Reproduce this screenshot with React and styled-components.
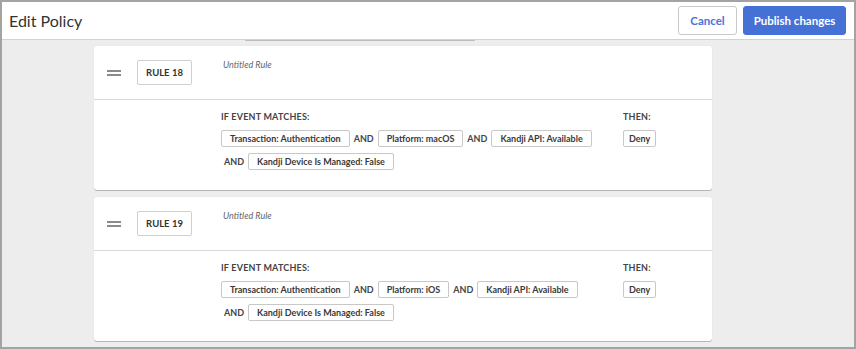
import React from "react";
import styled, { createGlobalStyle } from "styled-components";

const GlobalStyle = createGlobalStyle`
  html, body {
    margin: 0;
    padding: 0;
    background: #ffffff;
  }
  * {
    box-sizing: border-box;
  }
`;

const Frame = styled.div`
  width: 856px;
  height: 349px;
  border: 2px solid #a3a3a3;
  display: flex;
  flex-direction: column;
  overflow: hidden;
  font-family: Lato, "Liberation Sans", sans-serif;
  color: #333;
`;

const TopBar = styled.div`
  height: 38px;
  flex-shrink: 0;
  display: flex;
  align-items: center;
  justify-content: space-between;
  padding: 0 8px 0 7px;
  background: #fff;
  border-bottom: 1px solid #d2d2d2;
`;

const Title = styled.h1`
  margin: 0;
  font-size: 16px;
  font-weight: 400;
  color: #333;
`;

const Actions = styled.div`
  display: flex;
  gap: 6px;
`;

const Button = styled.button`
  height: 29px;
  padding: 0;
  font-family: inherit;
  font-size: 11.5px;
  font-weight: 700;
  white-space: nowrap;
  border-radius: 3px;
  border: 1px solid ${(p) => (p.primary ? "#4571d6" : "#c9c9c9")};
  background: ${(p) => (p.primary ? "#4571d6" : "#fff")};
  color: ${(p) => (p.primary ? "#fff" : "#4a72d8")};
  width: ${(p) => p.w}px;
`;

const Content = styled.div`
  flex: 1;
  background: #ededed;
  display: flex;
  flex-direction: column;
  gap: 7px;
  padding-left: 92px;
  overflow: hidden;
`;

const PrevTail = styled.div`
  height: 1px;
  flex-shrink: 0;
  margin-bottom: -2px;
  display: flex;
  & span {
    margin-left: 151px;
    width: 230px;
    height: 1px;
    background: #bdbdbd;
  }
`;

const Card = styled.div`
  width: 618px;
  flex-shrink: 0;
  background: #fff;
  border-radius: 3px;
  box-shadow: 0 1px 0 #b5b5b5, 0 0 1px #d5d5d5;
`;

const CardHead = styled.div`
  height: 54px;
  display: flex;
  align-items: flex-start;
  border-bottom: 1px solid #d9d9d9;
`;

const Handle = styled.div`
  width: 14px;
  margin: 24px 0 0 13px;
  display: flex;
  flex-direction: column;
  gap: 2px;
  & span {
    height: 2px;
    background: #8a8a8a;
  }
`;

const RuleBadge = styled.div`
  margin: 14px 0 0 16px;
  width: 55px;
  height: 25px;
  border: 1px solid #cfcfcf;
  border-radius: 2px;
  display: flex;
  align-items: center;
  justify-content: center;
  font-size: 9.5px;
  font-weight: 700;
  color: #333;
`;

const RuleName = styled.div`
  margin: 13px 0 0 31px;
  font-size: 9px;
  font-style: italic;
  color: #666;
`;

const CardBody = styled.div`
  height: ${(p) => p.h}px;
  display: grid;
  grid-template-columns: 402px auto;
  padding: 11px 0 0 127px;
`;

const Label = styled.div`
  font-size: 9px;
  font-weight: 700;
  color: #444;
  letter-spacing: 0.2px;
  margin-bottom: 8px;
`;

const ChipRow = styled.div`
  display: flex;
  align-items: center;
  gap: 4px;
  margin-bottom: 6px;
  padding-left: ${(p) => (p.indent ? 3 : 0)}px;
`;

const Chip = styled.span`
  height: 17px;
  padding: 0 ${(p) => (p.tight ? 5 : 8)}px;
  border: 1px solid #c8c8c8;
  border-radius: 2px;
  display: inline-flex;
  align-items: center;
  font-size: 9px;
  font-weight: 700;
  color: #3a3a3a;
  white-space: nowrap;
`;

const And = styled.span`
  font-size: 9px;
  font-weight: 700;
  color: #444;
`;

const rules = [
  {
    num: 18,
    platform: "Platform: macOS",
    body: 90,
  },
  {
    num: 19,
    platform: "Platform: iOS",
    body: 90,
  },
];

const Rule = ({ rule }) => (
  <Card>
    <CardHead>
      <Handle>
        <span />
        <span />
      </Handle>
      <RuleBadge>RULE {rule.num}</RuleBadge>
      <RuleName>Untitled Rule</RuleName>
    </CardHead>
    <CardBody h={rule.body}>
      <div>
        <Label>IF EVENT MATCHES:</Label>
        <ChipRow>
          <Chip>Transaction: Authentication</Chip>
          <And>AND</And>
          <Chip>{rule.platform}</Chip>
          <And>AND</And>
          <Chip>Kandji API: Available</Chip>
        </ChipRow>
        <ChipRow indent>
          <And>AND</And>
          <Chip>Kandji Device Is Managed: False</Chip>
        </ChipRow>
      </div>
      <div>
        <Label>THEN:</Label>
        <ChipRow>
          <Chip tight>Deny</Chip>
        </ChipRow>
      </div>
    </CardBody>
  </Card>
);

export default function App() {
  return (
    <>
      <GlobalStyle />
      <Frame>
        <TopBar>
          <Title>Edit Policy</Title>
          <Actions>
            <Button w={59}>Cancel</Button>
            <Button primary w={103}>
              Publish changes
            </Button>
          </Actions>
        </TopBar>
        <Content>
          <PrevTail>
            <span />
          </PrevTail>
          {rules.map((r) => (
            <Rule key={r.num} rule={r} />
          ))}
        </Content>
      </Frame>
    </>
  );
}
